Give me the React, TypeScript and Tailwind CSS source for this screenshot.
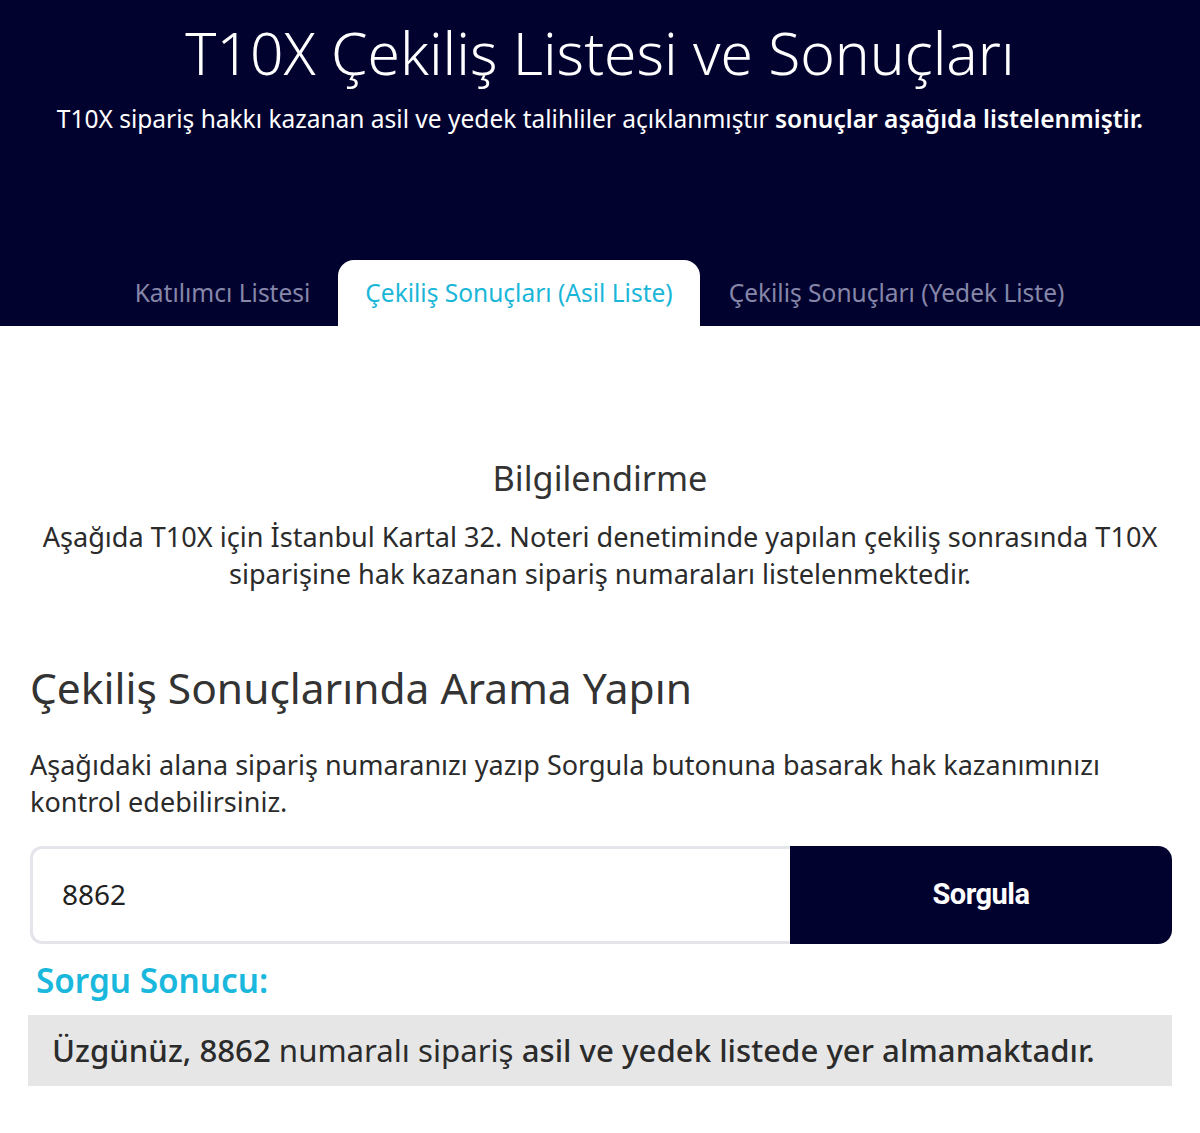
import React from "react";

export default function App() {
  const font = { fontFamily: '"Noto Sans", "Open Sans", sans-serif' };
  return (
    <div className="w-[1200px] min-h-[1133px] bg-white text-[#333333]" style={font}>
      <header className="bg-[#02022f] h-[326px] flex flex-col items-center">
        <h1 className="mt-[16px] text-[58.7px] leading-[72px] font-light text-white">
          T10X Çekiliş Listesi ve Sonuçları
        </h1>
        <p className="mt-[15px] text-[24.5px] leading-[32px] text-white">
          T10X sipariş hakkı kazanan asil ve yedek talihliler açıklanmıştır{" "}
          <span className="font-semibold">sonuçlar aşağıda listelenmiştir.</span>
        </p>
        <nav className="mt-auto flex items-stretch h-[66px]">
          <div className="px-[28px] flex items-center text-[24.5px] text-[#8687a8]">Katılımcı Listesi</div>
          <div className="px-[27px] flex items-center text-[24.5px] text-[#1ab6d8] bg-white rounded-t-[16px]">
            Çekiliş Sonuçları (Asil Liste)
          </div>
          <div className="px-[29px] flex items-center text-[24.5px] text-[#8687a8]">
            Çekiliş Sonuçları (Yedek Liste)
          </div>
        </nav>
      </header>

      <main className="px-[28px]">
        <section className="pt-[130px] text-center">
          <h2 className="text-[34.3px] leading-[44px] text-[#333333]">Bilgilendirme</h2>
          <p className="mt-[18px] text-[27.1px] leading-[37px] text-[#2b2b2b]">
            Aşağıda T10X için İstanbul Kartal 32. Noteri denetiminde yapılan çekiliş sonrasında T10X siparişine hak
            kazanan sipariş numaraları listelenmektedir.
          </p>
        </section>

        <section className="mt-[70px]">
          <h2 className="pl-[2px] text-[42.5px] leading-[52px] text-[#333333]">Çekiliş Sonuçlarında Arama Yapın</h2>
          <p className="mt-[32px] pl-[2px] text-[27px] leading-[37px] text-[#2b2b2b]">
            Aşağıdaki alana sipariş numaranızı yazıp Sorgula butonuna basarak hak kazanımınızı kontrol
            edebilirsiniz.
          </p>

          <div className="mt-[26px] flex h-[98px] pl-[2px]">
            <div className="flex-1 flex items-center border-[3px] border-r-0 border-[#e4e4eb] rounded-l-[12px] pl-[29px] pb-[2px] text-[28px] text-[#222222]">
              8862
            </div>
            <button
              className="w-[382px] bg-[#02022f] rounded-r-[14px] text-white text-[29px] font-bold"
              style={{ fontFamily: '"Roboto", sans-serif', letterSpacing: "-0.5px" }}
            >
              Sorgula
            </button>
          </div>

          <div className="mt-[16px] pl-[8px] text-[33.3px] leading-[40px] font-semibold text-[#1ab8dc]">Sorgu Sonucu:</div>

          <div className="mt-[15px] bg-[#e6e6e6] h-[71px] flex items-center px-[24px] text-[31.2px] text-[#2b2b2b]">
            <span className="font-medium">Üzgünüz, 8862</span>
            <span>&nbsp;numaralı sipariş&nbsp;</span>
            <span className="font-medium">asil ve yedek listede yer almamaktadır.</span>
          </div>
        </section>
      </main>
    </div>
  );
}
